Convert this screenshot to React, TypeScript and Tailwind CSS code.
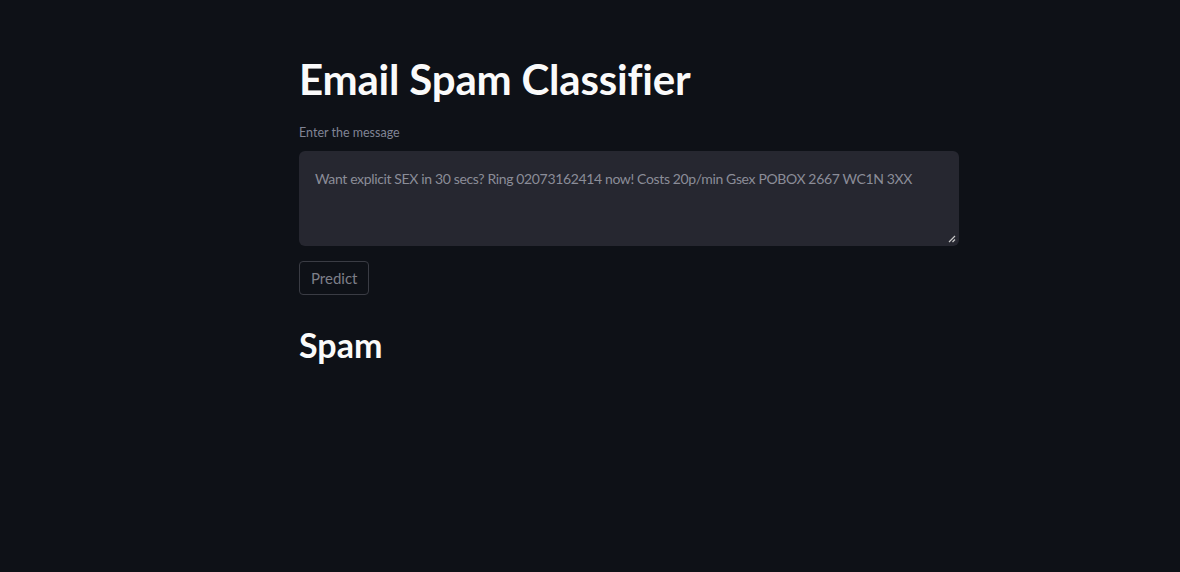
import React from "react";

export default function App() {
  return (
    <div className="min-h-[572px] w-full bg-[#0e1117] text-[#fafafa]" style={{ fontFamily: "Lato, 'Noto Sans', sans-serif" }}>
      <div className="w-[660px] pt-[50px] ml-[299px]">
        <h1 className="text-[42px] font-bold leading-[1.2] tracking-[-0.2px] text-[#fafafa] py-[4px]">Email Spam Classifier</h1>
        <div className="mt-[17px] text-[12.5px] leading-[16px] text-[#808495]">Enter the message</div>
        <div className="relative mt-[10px] h-[95px] w-full rounded-[6px] bg-[#262730] px-[16px] pt-[18px]">
          <div className="whitespace-nowrap text-[14px] leading-[20px] tracking-[-0.36px] text-[#8b8d98]">
            Want explicit SEX in 30 secs? Ring 02073162414 now! Costs 20p/min Gsex POBOX 2667 WC1N 3XX
          </div>
          <svg className="absolute bottom-[3px] right-[3px]" width="8" height="8" viewBox="0 0 8 8">
            <path d="M7 1 L1 7 M7 4.5 L4.5 7" stroke="#c8c8c8" strokeWidth="1.2" />
          </svg>
        </div>
        <button className="mt-[15px] flex h-[34px] items-center rounded-[4px] border border-[#3a3c44] px-[11px] text-[15px] text-[#7d7f88]">
          Predict
        </button>
        <h2 className="mt-[30px] text-[34px] font-bold leading-[1.2] text-[#fafafa]">Spam</h2>
      </div>
    </div>
  );
}
